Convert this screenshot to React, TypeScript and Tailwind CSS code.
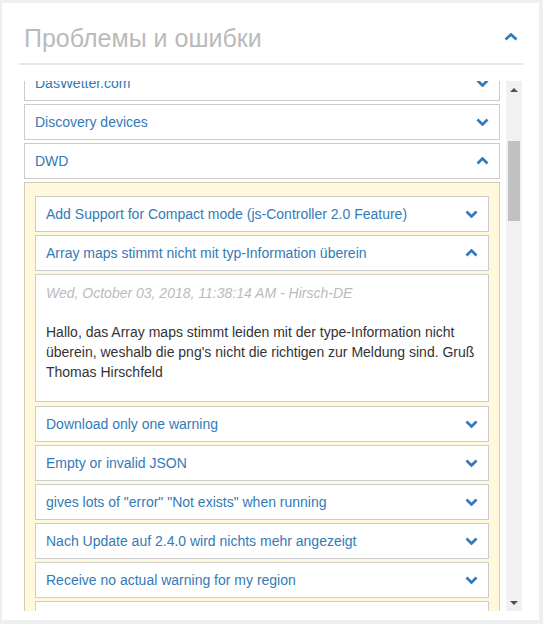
import React from "react";

const blue = "#337ab7";

function Chevron({ up = false, big = false }: { up?: boolean; big?: boolean }) {
  const w = big ? 14 : 13;
  return (
    <svg width={w} height="8" viewBox={`0 0 ${w} 8`} className="shrink-0">
      <polyline
        points={up ? `1.5,6.5 ${w / 2},1.5 ${w - 1.5},6.5` : `1.5,1.5 ${w / 2},6.5 ${w - 1.5},1.5`}
        fill="none"
        stroke={blue}
        strokeWidth="2.7"
        strokeLinejoin="miter"
      />
    </svg>
  );
}

function Item({ title, up = false, className = "" }: { title: string; up?: boolean; className?: string }) {
  return (
    <div
      className={
        "flex h-[36px] items-center justify-between border border-[#cccccc] bg-white pl-[10px] pr-[10px] " +
        className
      }
    >
      <span className="text-[14px] leading-[20px] text-[#337ab7]">{title}</span>
      <Chevron up={up} />
    </div>
  );
}

const inner = [
  "Download only one warning",
  "Empty or invalid JSON",
  'gives lots of "error" "Not exists" when running',
  "Nach Update auf 2.4.0 wird nichts mehr angezeigt",
  "Receive no actual warning for my region",
  "",
];

export default function App() {
  return (
    <div
      className="h-[624px] w-[543px] bg-[#eeeff1] pl-[2px] pr-[4px] pt-[3px] pb-[4px]"
      style={{ fontFamily: '"Liberation Sans", Arial, sans-serif' }}
    >
      <div className="flex h-[617px] flex-col bg-white pl-[17px] pr-[16px] pt-[20px]">
        {/* Header */}
        <div className="flex items-center justify-between border-b-2 border-[#e3e7eb] pb-[10px] pl-[5px] pr-[5px]">
          <h2 className="text-[25px] leading-[30px] text-[#bababa]">Проблемы и ошибки</h2>
          <div className="-mt-[3px]">
            <Chevron up big />
          </div>
        </div>

        {/* Scroll area */}
        <div className="mt-[16px] flex h-[530px] gap-[6px] overflow-hidden pl-[5px]">
          <div className="flex w-[476px] flex-col gap-[3px]">
            <Item title="DasWetter.com" className="-mt-[16px] shrink-0" />
            <Item title="Discovery devices" className="shrink-0" />
            <Item title="DWD" up className="shrink-0" />
            <div className="shrink-0 border border-[#d2cbb6] bg-[#fff8dc] px-[10px] pt-[13px] pb-[10px]">
              <div className="flex flex-col gap-[3px]">
                <Item title="Add Support for Compact mode (js-Controller 2.0 Feature)" />
                <Item title="Array maps stimmt nicht mit typ-Information überein" up />
                <div className="border border-[#cccccc] bg-white px-[10px] pt-[8px] pb-[19px] text-[14px] leading-[20px]">
                  <p className="italic text-[#bbbbbb]">Wed, October 03, 2018, 11:38:14 AM - Hirsch-DE</p>
                  <p className="mt-[19px] text-[#333333]">
                    Hallo, das Array maps stimmt leiden mit der type-Information nicht
                    <br />
                    überein, weshalb die png's nicht die richtigen zur Meldung sind. Gruß
                    <br />
                    Thomas Hirschfeld
                  </p>
                </div>
                <div className="mt-[1px] flex flex-col gap-[3px]">
                  {inner.map((t, i) => (
                    <Item key={i} title={t} />
                  ))}
                </div>
              </div>
            </div>
          </div>

          {/* Scrollbar */}
          <div className="flex h-full w-[16px] flex-col items-center bg-[#f1f1f1]">
            <div className="flex h-[17px] w-full items-center justify-center">
              <div className="h-0 w-0 border-x-[4px] border-b-[4px] border-x-transparent border-b-[#505050]" />
            </div>
            <div className="h-[43px]" />
            <div className="h-[80px] w-[12px] bg-[#c1c1c1]" />
            <div className="flex-1" />
            <div className="flex h-[17px] w-full items-center justify-center">
              <div className="h-0 w-0 border-x-[4px] border-t-[4px] border-x-transparent border-t-[#505050]" />
            </div>
          </div>
        </div>
      </div>
    </div>
  );
}
